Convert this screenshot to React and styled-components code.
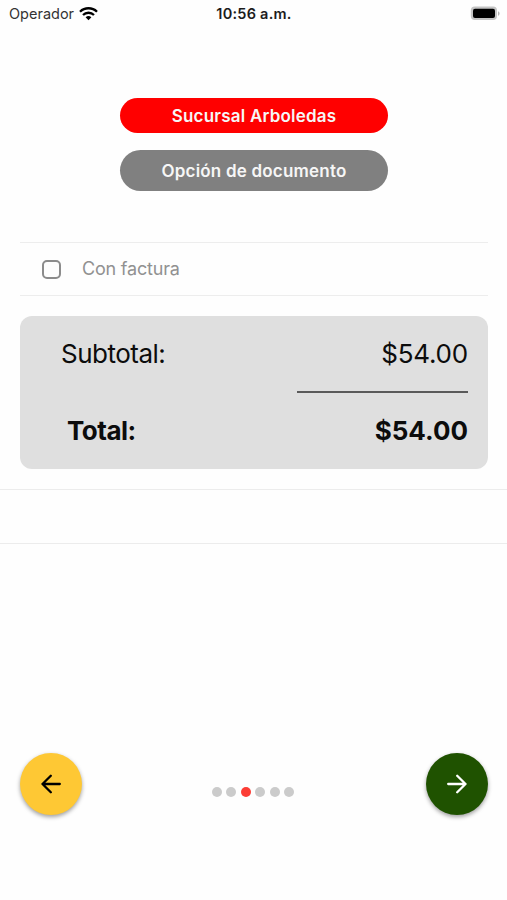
import React, { useState } from 'react';
import styled, { createGlobalStyle } from 'styled-components';

const GlobalStyles = createGlobalStyle`
  * {
    box-sizing: border-box;
  }

  body {
    margin: 0;
    background: #fefefe;
    font-family: Inter, 'Liberation Sans', sans-serif;
  }

  button {
    font-family: inherit;
    border: 0;
    padding: 0;
  }
`;

const Screen = styled.div`
  display: flex;
  flex-direction: column;
  height: 900px;
  overflow: hidden;
`;

const StatusBar = styled.div`
  display: grid;
  grid-template-columns: 1fr auto 1fr;
  align-items: center;
  height: 27px;
  padding: 0 7px 0 9px;
`;

const Carrier = styled.div`
  display: flex;
  align-items: center;
  gap: 5px;
  font-size: 14.5px;
  color: #333;
`;

const Clock = styled.div`
  margin-right: 1px;
  font-size: 14.5px;
  font-weight: 600;
  letter-spacing: 0.25px;
  color: #1c1c1c;
`;

const Battery = styled.svg`
  justify-self: end;
`;

const Pills = styled.div`
  display: flex;
  flex-direction: column;
  align-items: center;
  gap: 17px;
  padding: 71px 0 51px 1px;
`;

const Pill = styled.button`
  width: 268px;
  height: ${(props) => props.$height}px;
  border-radius: 21px;
  background: ${(props) => props.$color};
  color: #f6f6f6;
  font-size: 17px;
  font-weight: 600;
`;

const InvoiceRow = styled.label`
  display: flex;
  align-items: center;
  height: 54px;
  margin: 0 19px 0 20px;
  padding-left: 22px;
  border-top: 1px solid #ededed;
  border-bottom: 1px solid #ededed;
  color: #919191;
  font-size: 18px;
`;

const Checkbox = styled.input`
  appearance: none;
  width: 19px;
  height: 19px;
  margin: 0 21px 0 0;
  border: 2px solid #8c8c8c;
  border-radius: 5px;
`;

const Totals = styled.div`
  height: 153px;
  margin: 20px 19px 20px 20px;
  padding: 21px 20px 0 41px;
  border-radius: 12px;
  background: #dfdfdf;
  color: #0c0c0c;
`;

const TotalRow = styled.div`
  display: flex;
  justify-content: space-between;
  height: 34px;
  padding-left: ${(props) => (props.$bold ? '6px' : '0')};
  font-size: 26px;
  line-height: 34px;
  font-weight: ${(props) => (props.$bold ? 700 : 400)};
`;

const Label = styled.span`
  padding-bottom: ${(props) => props.$lift || 0}px;
  letter-spacing: ${(props) => props.$spacing || 0}px;
`;

const Rule = styled.div`
  width: 171px;
  height: 2px;
  margin: 20px 0 21px auto;
  background: #5a5a5a;
`;

const EmptyRow = styled.div`
  height: 55px;
  border-top: 1px solid #ececec;
  border-bottom: 1px solid #ececec;
`;

const Footer = styled.div`
  display: flex;
  justify-content: space-between;
  align-items: center;
  height: 62px;
  margin: auto 19px 85px 20px;
`;

const RoundButton = styled.button`
  display: flex;
  align-items: center;
  justify-content: center;
  width: 62px;
  height: 62px;
  border-radius: 50%;
  background: ${(props) => props.$background};
  color: ${(props) => props.$color};
  box-shadow: 0 2px 4px rgba(0, 0, 0, 0.38);
`;

const Dots = styled.div`
  display: flex;
  gap: 4.4px;
  padding: 16px 2px 0 0;
`;

const Dot = styled.span`
  width: 10px;
  height: 10px;
  border-radius: 50%;
  background: ${(props) => (props.$active ? '#fc3d35' : '#cbcbcb')};
`;

const WifiIcon = () => (
  <svg width="19" height="14" viewBox="0 0 19 14" fill="none" stroke="#000" strokeWidth="2.3">
    <path d="M1 4.7a12.2 12.2 0 0 1 17 0" />
    <path d="M4 8a7.9 7.9 0 0 1 11 0" />
    <path d="M9.5 13.3 6.6 10.3a4.2 4.2 0 0 1 5.8 0Z" fill="#000" stroke="none" />
  </svg>
);

const BatteryIcon = () => (
  <Battery width="30" height="15" viewBox="0 0 30 15">
    <rect x="0.8" y="0.6" width="26.2" height="13.4" rx="4" fill="#c4c4c4" />
    <rect x="3" y="2.7" width="22" height="9.2" rx="2" fill="#000" />
    <path d="M28 5.2c2.1.8 2.1 3.8 0 4.6Z" fill="#b5b5b5" />
  </Battery>
);

const ArrowIcon = ({ right }) => (
  <svg width="20" height="20" viewBox="0 0 20 20" fill="none" stroke="currentColor" strokeWidth="2.3" strokeLinecap="round" strokeLinejoin="round">
    {right
      ? <path d="M1.2 10H18.5M10.2 1.7 18.5 10l-8.3 8.3" />
      : <path d="M18.8 10H1.5M9.8 1.7 1.5 10l8.3 8.3" />}
  </svg>
);

const STEPS = 6;

export default function App() {
  const [step, setStep] = useState(2);
  const [invoice, setInvoice] = useState(false);

  return (
    <>
      <GlobalStyles />
      <Screen>
        <StatusBar>
          <Carrier>
            <Label>Operador</Label>
            <WifiIcon />
          </Carrier>
          <Clock>10:56 a.m.</Clock>
          <BatteryIcon />
        </StatusBar>

        <Pills>
          <Pill $height={35} $color="#ff0000">
            <Label $spacing={0.2}>Sucursal Arboledas</Label>
          </Pill>
          <Pill $height={41} $color="#808080">
            <Label $spacing={0.2}>Opción de documento</Label>
          </Pill>
        </Pills>

        <InvoiceRow>
          <Checkbox type="checkbox" checked={invoice} onChange={() => { setInvoice(!invoice); }} />
          <Label $spacing={-0.2} $lift={2}>Con factura</Label>
        </InvoiceRow>

        <Totals>
          <TotalRow>
            <Label $spacing={-0.5}>Subtotal:</Label>
            <Label $spacing={-0.2}>$54.00</Label>
          </TotalRow>
          <Rule />
          <TotalRow $bold>
            <Label $spacing={-0.5}>Total:</Label>
            <Label>$54.00</Label>
          </TotalRow>
        </Totals>

        <EmptyRow />

        <Footer>
          <RoundButton $background="#fec834" $color="#000" onClick={() => { setStep(Math.max(0, step - 1)); }}>
            <ArrowIcon />
          </RoundButton>
          <Dots>
            {Array.from({ length: STEPS }, (_, i) => <Dot key={i} $active={i === step} />)}
          </Dots>
          <RoundButton $background="#1f5200" $color="#fff" onClick={() => { setStep(Math.min(STEPS - 1, step + 1)); }}>
            <ArrowIcon right />
          </RoundButton>
        </Footer>
      </Screen>
    </>
  );
}
